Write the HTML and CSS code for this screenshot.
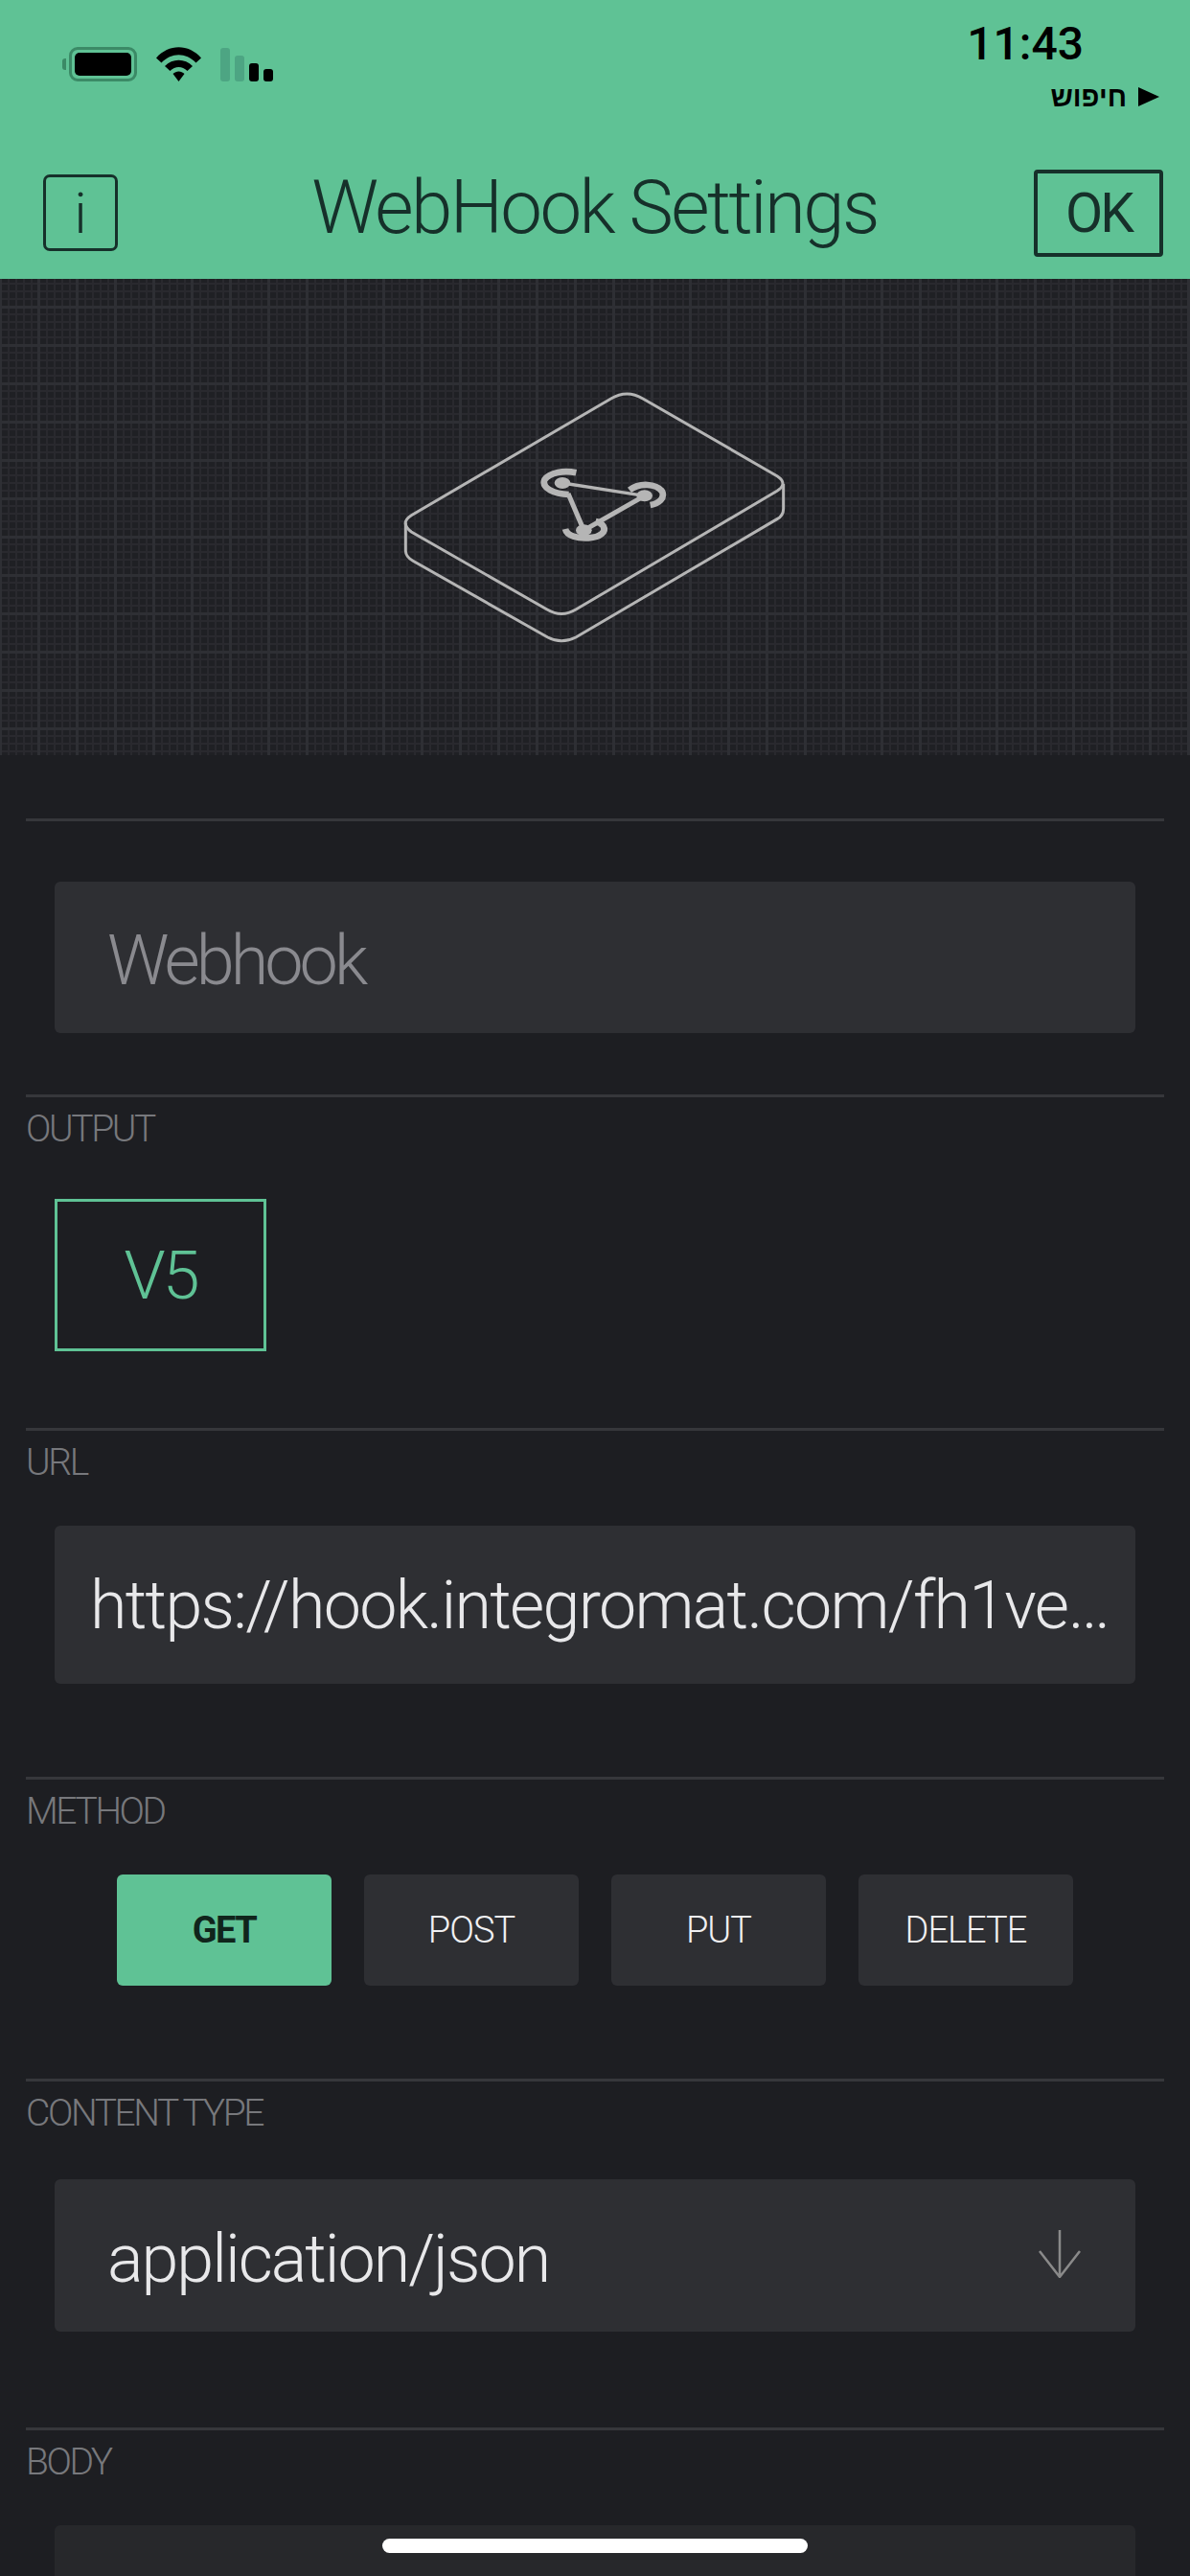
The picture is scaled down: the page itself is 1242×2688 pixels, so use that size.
FILE: index.html
```html
<!DOCTYPE html>
<html lang="en">
  <head>
    <meta charset="UTF-8" />
    <meta name="viewport" content="width=device-width, initial-scale=1.0" />
    <title>WebHook Settings</title>
    <link rel="stylesheet" href="styles.css">
  </head>
  <body>
    <header class="top">
      <div class="status-bar">
        <div class="status-icons">
          <div class="battery">
            <span class="battery-nub"></span>
            <span class="battery-case"><span class="battery-fill"></span></span>
          </div>
          <svg class="wifi" viewBox="0 0 47 36" width="47" height="36">
            <path d="M0 11.5 C13 -3.5 34 -3.5 47 11.5 L41.5 16.5 C31 5.5 16 5.5 5.5 16.5 Z" />
            <path d="M9 20 C17 11.5 30 11.5 38 20 L32.5 25 C27 19.5 20 19.5 14.5 25 Z" />
            <path d="M17.5 28 C21 24.5 26 24.5 29.5 28 L23.5 36 Z" />
          </svg>
          <div class="signal">
            <span class="bar bar-1"></span>
            <span class="bar bar-2"></span>
            <span class="bar bar-3"></span>
            <span class="bar bar-4"></span>
          </div>
        </div>
        <div class="status-right">
          <div class="time">11:43</div>
          <div class="back-link">
            <span class="back-text" dir="rtl">חיפוש</span>
            <span class="back-arrow"></span>
          </div>
        </div>
      </div>
      <nav class="nav">
        <button class="info-btn">i</button>
        <h1 class="title">WebHook Settings</h1>
        <button class="ok-btn">OK</button>
      </nav>
    </header>

    <div class="hero">
      <svg class="device" viewBox="0 0 1440 960" width="480" height="320">
        <g class="device-lines">
          <path d="M770 108 Q820 78 870 108 L1290 350 Q1326 373 1290 397 L660 768 Q615 795 570 768 L145 525 Q108 497 145 473 Z" />
          <path d="M127 497 L127 585 Q128 603 150 616 L572 855 Q615 878 660 855 L1290 485 Q1310 474 1310 452 L1310 375" />
        </g>
        <g class="logo-lines">
          <path class="logo-thin" d="M618 372 L875 412" />
          <path d="M636 405 L685 520 L875 412" />
          <path class="logo-arc" d="M661 340 C625 332 578 338 562 362 C552 388 592 406 638 408" />
          <path class="logo-arc" d="M828 394 C860 370 912 374 930 398 C940 420 920 436 893 441" />
          <path class="logo-arc" d="M627 516 C632 538 665 546 700 544 C738 542 756 524 746 507 C741 499 734 495 722 492" />
        </g>
        <ellipse class="logo-node" cx="618" cy="372" rx="25" ry="18" />
        <ellipse class="logo-node" cx="875" cy="412" rx="25" ry="18" />
        <ellipse class="logo-node" cx="685" cy="520" rx="25" ry="18" />
      </svg>
    </div>

    <main class="settings">
      <section class="section section-name">
        <div class="field field-name">Webhook</div>
      </section>

      <section class="section section-output">
        <div class="label label-output">OUTPUT</div>
        <div class="pin">V5</div>
      </section>

      <section class="section section-url">
        <div class="label">URL</div>
        <div class="field field-url">https://hook.integromat.com/fh1ve…</div>
      </section>

      <section class="section section-method">
        <div class="label">METHOD</div>
        <div class="methods">
          <button class="method active">GET</button>
          <button class="method">POST</button>
          <button class="method">PUT</button>
          <button class="method">DELETE</button>
        </div>
      </section>

      <section class="section section-type">
        <div class="label label-type">CONTENT TYPE</div>
        <div class="field field-type">
          <span>application/json</span>
          <svg class="arrow" viewBox="0 0 44 50" width="44" height="50">
            <path d="M22 0 L22 49 M1 22 L22 49 L43 22" />
          </svg>
        </div>
      </section>

      <section class="section section-body">
        <div class="label">BODY</div>
        <div class="field field-body"></div>
      </section>
    </main>

    <div class="home-bar"></div>
  </body>
</html>
```

FILE: styles.css
```css
/* Layout */
html,
body {
  margin: 0;
  padding: 0;
}
body {
  width: 1242px;
  height: 2688px;
  overflow: hidden;
  position: relative;
  background: #1d1e22;
  font-family: Roboto, "Noto Sans", sans-serif;
  color: #e8e8ea;
}
button {
  font-family: inherit;
  padding: 0;
  margin: 0;
  cursor: pointer;
}

/* Green header */
.top {
  height: 291px;
  background: #5fc295;
  color: #16302a;
}
.status-bar {
  height: 153px;
  box-sizing: border-box;
  display: flex;
  justify-content: space-between;
  padding: 18px 32px 0 65px;
}
.status-icons {
  display: flex;
  align-items: flex-end;
  height: 67px;
  gap: 20px;
}
.battery {
  display: flex;
  align-items: center;
  gap: 3px;
}
.battery-nub {
  width: 4px;
  height: 12px;
  background: #3b8a66;
  border-radius: 3px 0 0 3px;
}
.battery-case {
  width: 71px;
  height: 36px;
  box-sizing: border-box;
  border: 3px solid #3b8a66;
  border-radius: 9px;
  padding: 3px;
  display: flex;
}
.battery-fill {
  flex: 1;
  background: #000;
  border-radius: 5px;
}
.wifi {
  fill: #000;
}
.signal {
  display: flex;
  align-items: flex-end;
  gap: 5px;
}
.bar {
  width: 10px;
  border-radius: 3px;
  background: #000;
}
.bar-1 {
  height: 35px;
  background: #4da583;
}
.bar-2 {
  height: 27px;
  background: #4da583;
}
.bar-3 {
  height: 19px;
}
.bar-4 {
  height: 13px;
}
.status-right {
  display: flex;
  flex-direction: column;
  align-items: flex-end;
}
.time {
  font-size: 48px;
  line-height: 56px;
  font-weight: 500;
  color: #000;
  margin-right: 79px;
}
.back-link {
  display: flex;
  align-items: center;
  gap: 12px;
  margin-top: 12px;
  color: #000;
}
.back-text {
  font-family: "Liberation Sans", sans-serif;
  font-weight: 700;
  font-size: 29px;
  line-height: 30px;
}
.back-arrow {
  width: 0;
  height: 0;
  border-left: 22px solid #000;
  border-top: 10px solid transparent;
  border-bottom: 10px solid transparent;
}
.nav {
  height: 138px;
  box-sizing: border-box;
  display: grid;
  grid-template-columns: 1fr auto 1fr;
  align-items: center;
  padding: 0 28px 0 45px;
}
.title {
  margin: 0 18px 10px 0;
  font-size: 78px;
  font-weight: 300;
  letter-spacing: -2.6px;
  line-height: 90px;
  color: #16302a;
}
.info-btn {
  justify-self: start;
  width: 78px;
  height: 80px;
  background: none;
  border: 3px solid #16302a;
  border-radius: 7px;
  color: #16302a;
  font-size: 60px;
  font-weight: 300;
}
.ok-btn {
  justify-self: end;
  width: 135px;
  height: 91px;
  background: none;
  border: 4px solid #16302a;
  border-radius: 4px;
  color: #16302a;
  font-size: 57px;
  font-weight: 400;
  letter-spacing: -3px;
}

/* Grid paper behind the device */
.hero {
  height: 497px;
  display: flex;
  align-items: center;
  justify-content: center;
  background-color: #1f2024;
  background-image:
    linear-gradient(#2e2f34 3px, transparent 3px),
    linear-gradient(90deg, #2e2f34 3px, transparent 3px),
    linear-gradient(#29292e 2px, transparent 2px),
    linear-gradient(90deg, #29292e 2px, transparent 2px);
  background-size: 40px 40px, 40px 40px, 8px 8px, 8px 8px;
  background-position: 0 -12px, -1px 0, 0 -4px, 0 0;
}
.device-lines {
  fill: none;
  stroke: #b5b5b5;
  stroke-width: 9;
}
.logo-lines {
  fill: none;
  stroke: #b5b5b5;
  stroke-width: 15;
}
.logo-thin {
  stroke-width: 10;
}
.logo-arc {
  stroke-width: 20;
}
.logo-node {
  fill: #b5b5b5;
}

/* Settings list */
.settings {
  padding: 66px 27px 0;
}
.section {
  border-top: 3px solid #36373b;
}
.section-name {
  padding: 63px 0 64px;
}
.section-output {
  padding-bottom: 80px;
}
.section-url,
.section-method {
  padding-bottom: 97px;
}
.section-type {
  padding-bottom: 100px;
}
.label {
  margin-top: 8px;
  margin-bottom: 41px;
  height: 50px;
  line-height: 50px;
  font-size: 39px;
  font-weight: 300;
  letter-spacing: -2.4px;
  color: #77787c;
}
.label-output {
  margin-bottom: 48px;
}
.label-type {
  margin-bottom: 44px;
}
.field {
  margin: 0 30px;
  background: #2e2f33;
  border-radius: 6px;
  display: flex;
  align-items: center;
  box-sizing: border-box;
  font-size: 72px;
  font-weight: 300;
}
.field-name {
  height: 158px;
  padding: 6px 0 0 55px;
  color: #8a8a8f;
  letter-spacing: -4px;
}
.field-url {
  height: 165px;
  padding: 0 0 0 37px;
  font-size: 70px;
  letter-spacing: -1.7px;
  white-space: nowrap;
  overflow: hidden;
}
.field-type {
  height: 159px;
  padding: 6px 57px 0 55px;
  font-size: 70px;
  letter-spacing: -2px;
  justify-content: space-between;
}
.field-body {
  height: 60px;
  background: #27282b;
}
.arrow {
  fill: none;
  stroke: #8a8a8a;
  stroke-width: 2.5;
  margin-top: -9px;
}
.pin {
  margin-left: 30px;
  width: 221px;
  height: 159px;
  box-sizing: border-box;
  border: 3px solid #5fc295;
  display: flex;
  align-items: center;
  justify-content: center;
  color: #5fc295;
  font-size: 70px;
  font-weight: 300;
  letter-spacing: -3px;
}
.methods {
  display: flex;
  justify-content: center;
  gap: 34px;
}
.method {
  width: 224px;
  height: 116px;
  background: #2e2f33;
  border: none;
  border-radius: 6px;
  color: #f0f0f2;
  font-size: 38px;
  font-weight: 300;
  letter-spacing: -1px;
}
.method.active {
  background: #5fc295;
  color: #10251c;
  font-weight: 700;
  letter-spacing: -1.5px;
}

/* Home indicator */
.home-bar {
  position: absolute;
  left: 399px;
  top: 2649px;
  width: 444px;
  height: 15px;
  border-radius: 8px;
  background: #fff;
}
```
